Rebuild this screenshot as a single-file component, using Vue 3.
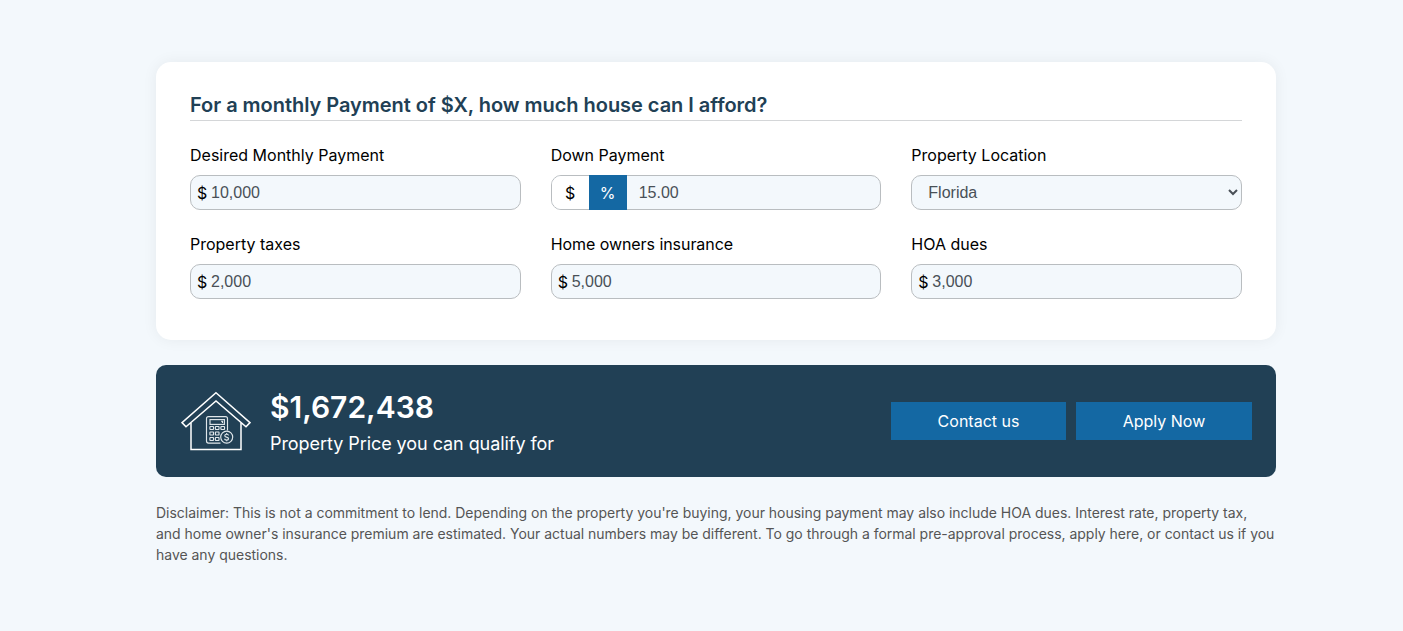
<script setup>
import { ref } from 'vue'

const payment = ref('10,000')
const down = ref('15.00')
const state = ref('Florida')
const costs = ref([
  { id: 'taxes', label: 'Property taxes', value: '2,000' },
  { id: 'insurance', label: 'Home owners insurance', value: '5,000' },
  { id: 'hoa', label: 'HOA dues', value: '3,000' },
])
const keys = [0, 1, 2].flatMap((r) => [0, 1, 2].map((c) => ({ r, c }))).filter((k) => !(k.c === 2 && k.r > 0))
</script>

<template>
  <main class="page">
    <section class="card">
      <h2 class="title">For a monthly Payment of $X, how much house can I afford?</h2>
      <div class="grid">
        <div class="field">
          <label class="label" for="payment">Desired Monthly Payment</label>
          <div class="box">
            <span class="prefix">$</span>
            <input id="payment" v-model="payment" class="input" type="text" />
          </div>
        </div>
        <div class="field">
          <label class="label" for="down">Down Payment</label>
          <div class="box split">
            <button class="unit" type="button">$</button>
            <button class="unit active" type="button">%</button>
            <input id="down" v-model="down" class="input" type="text" />
          </div>
        </div>
        <div class="field">
          <label class="label" for="state">Property Location</label>
          <select id="state" v-model="state" class="select">
            <option>Florida</option>
          </select>
        </div>
        <div v-for="c in costs" :key="c.id" class="field">
          <label class="label" :class="{ tight: c.id === 'insurance' }" :for="c.id">{{ c.label }}</label>
          <div class="box">
            <span class="prefix">$</span>
            <input :id="c.id" v-model="c.value" class="input" type="text" />
          </div>
        </div>
      </div>
    </section>

    <section class="result">
      <svg class="house" viewBox="0 -0.6 70 60" fill="none" stroke="#fff" aria-hidden="true">
        <path d="M35 1.2 L69 31 L65 35.2 L35 9.4 L5 35.2 L1 31 Z" stroke-width="1.5" />
        <path d="M10 31.5 V57.8 H60 V31.5" stroke-width="1.5" />
        <g stroke="#dfe6ea" stroke-width="1.15">
          <path d="M39.5 51.5 H27.5 a2 2 0 0 1 -2 -2 V27 a2 2 0 0 1 2 -2 H44.5 a2 2 0 0 1 2 2 V39" />
          <rect x="29" y="28" width="14.4" height="4.8" />
          <path d="M40 29.6 h2 M41.5 29.6 v1.8" />
          <rect
            v-for="k in keys"
            :key="`${k.r}-${k.c}`"
            :x="28.9 + k.c * 5.5"
            :y="34.9 + k.r * 5.5"
            width="3.6"
            height="3"
            rx=".4"
          />
          <circle cx="45.7" cy="45.5" r="6" />
          <path d="M47.7 43.8 c-.4-1-1-1.2-2-1.2 c-2.4 0-2.6 2.5-.2 2.9 c2.8.5 2.6 3 .2 3 c-1.2 0-1.9-.4-2.2-1.3 M45.7 41.3 v1.3 M45.7 48.4 v1.3" />
        </g>
      </svg>
      <div class="summary">
        <div class="amount">$1,672,438</div>
        <div class="caption">Property Price you can qualify for</div>
      </div>
      <div class="actions">
        <button class="action" type="button">Contact us</button>
        <button class="action" type="button">Apply Now</button>
      </div>
    </section>

    <p class="disclaimer">
      Disclaimer: This is not a commitment to lend. Depending on the property you're buying, your housing payment may
      also include HOA dues. Interest rate, property tax, and home owner's insurance premium are estimated. Your actual
      numbers may be different. To go through a formal pre-approval process, apply here, or contact us if you have any
      questions.
    </p>
  </main>
</template>

<style>
body {
  margin: 0;
  background: #f3f8fc;
}
</style>

<style scoped>
.page,
.page * {
  box-sizing: border-box;
}
.page {
  width: 1120px;
  margin-left: 156px;
  padding-top: 62px;
  font-family: Inter, sans-serif;
  font-size: 16px;
  color: #000;
}
.card {
  height: 278px;
  padding: 31px 34px 0;
  border-radius: 15px;
  background: #fff;
  box-shadow: 0 0 15px rgba(0, 0, 0, 0.06);
}
.title {
  height: 28px;
  margin: 0 0 22px;
  border-bottom: 1px solid #d4d6d8;
  font-size: 20px;
  font-weight: 600;
  letter-spacing: -0.035px;
  line-height: 24px;
  color: #214055;
}
.grid {
  display: grid;
  grid-template-columns: repeat(3, 1fr);
  gap: 22px 30px;
}
.field {
  display: flex;
  flex-direction: column;
  min-width: 0;
}
.label {
  height: 32px;
  line-height: 24px;
}
.label.tight {
  letter-spacing: -0.06px;
}
.box,
.select {
  width: 100%;
  height: 35px;
  border: 1px solid #b9bdc0;
  border-radius: 10px;
  background: #f3f8fc;
}
.box {
  display: flex;
  align-items: center;
  overflow: hidden;
  padding-left: 6px;
}
.prefix {
  width: 14px;
  line-height: 24px;
}
.input {
  flex: 1;
  min-width: 0;
  height: 33px;
  padding: 0;
  border: 0;
  outline: 0;
  background: transparent;
  font: 16px "Liberation Sans", sans-serif;
  color: #495057;
}
.split {
  padding-left: 0;
  overflow: visible;
}
.unit {
  width: 37px;
  height: 33px;
  padding: 0;
  border: 0;
  border-radius: 9px 0 0 9px;
  background: #fff;
  font: 16px Inter, sans-serif;
  color: #000;
}
.unit.active {
  width: 38px;
  height: 35px;
  border-radius: 0;
  background: #1468a3;
  color: #fff;
}
.split .input {
  padding-left: 12px;
}
.select {
  padding: 0 0 0 12px;
  font: 16px "Liberation Sans", sans-serif;
  color: #495057;
}
.result {
  display: flex;
  align-items: center;
  height: 112px;
  margin-top: 25px;
  padding: 0 24px 0 25px;
  border-radius: 10px;
  background: #214055;
  color: #fff;
}
.house {
  width: 70px;
  height: 60px;
  flex: none;
}
.summary {
  margin-left: 19px;
  padding-top: 3px;
}
.amount {
  font-size: 30px;
  font-weight: 600;
  line-height: 38px;
}
.caption {
  margin-top: 4px;
  font-size: 18px;
  letter-spacing: -0.06px;
  line-height: 27px;
}
.actions {
  display: flex;
  gap: 10px;
  margin-left: auto;
}
.action {
  width: 175px;
  height: 38px;
  padding: 0;
  border: 0;
  background: #1468a3;
  font: 16px Inter, sans-serif;
  color: #fff;
}
.action:last-child {
  width: 176px;
}
.disclaimer {
  margin: 25px 0 0;
  padding-right: 1.5px;
  font-size: 14px;
  letter-spacing: -0.02px;
  line-height: 21px;
  color: #555;
}
</style>
